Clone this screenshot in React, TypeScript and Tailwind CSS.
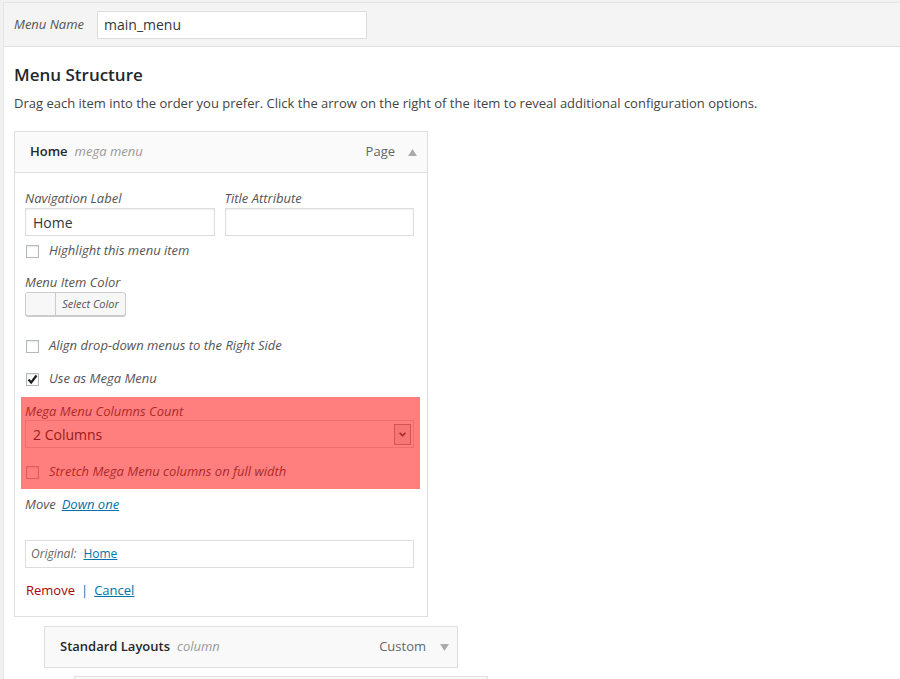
import React from "react";

const Check = ({ checked = false }: { checked?: boolean }) => (
  <span className="relative inline-block w-[13px] h-[13px] border border-[#b4b9be] bg-white shrink-0 shadow-[inset_0_1px_2px_rgba(0,0,0,0.1)]">
    {checked && (
      <svg viewBox="0 0 13 13" className="absolute -left-[1px] -top-[1px] w-[13px] h-[13px]">
        <path d="M2.5 6.5 L5.2 9.5 L10.5 2.5" fill="none" stroke="#1e1e1e" strokeWidth="2.2" />
      </svg>
    )}
  </span>
);

const CheckRow = ({ label, checked = false }: { label: string; checked?: boolean }) => (
  <div className="flex items-center h-[18px] pl-[1px]">
    <Check checked={checked} />
    <span className="ml-[10px] italic text-[13px] text-[#555]">{label}</span>
  </div>
);

const Field = ({ value = "", className = "" }: { value?: string; className?: string }) => (
  <div
    className={
      "h-[28px] border border-[#ddd] bg-white shadow-[inset_0_1px_2px_rgba(0,0,0,0.07)] flex items-center px-[7px] text-[14px] text-[#32373c] " +
      className
    }
  >
    {value}
  </div>
);

export default function App() {
  return (
    <div
      className="min-h-screen bg-[#f1f1f1] pt-[2px] pl-[3px] overflow-hidden"
      style={{ fontFamily: "'Open Sans', 'Liberation Sans', sans-serif" }}
    >
      <div className="bg-white border-l border-t border-[#e5e5e5] h-[677px] text-[#444] text-[13px]">
        {/* menu name header */}
        <div className="bg-[#f4f4f4] border-b border-[#dfdfdf] h-[44px] flex items-center pl-[10px]">
          <span className="italic text-[13px] text-[#555]">Menu Name</span>
          <div className="ml-[13px] w-[270px] h-[28px] border border-[#ddd] bg-white flex items-center px-[6px] text-[14px] text-[#32373c]">
            main_menu
          </div>
        </div>

        <div className="pl-[10px]">
          <h3 className="mt-[17px] text-[17px] font-semibold text-[#23282d] leading-[22px]">Menu Structure</h3>
          <p className="mt-[8px] leading-[18px]">
            Drag each item into the order you prefer. Click the arrow on the right of the item to reveal additional configuration options.
          </p>

          {/* Home item */}
          <div className="mt-[19px] w-[414px] border border-[#dfdfdf] bg-white">
            <div className="h-[41px] bg-[#fafafa] border-b border-[#dfdfdf] flex items-center pl-[15px] pr-[10px]">
              <span className="font-semibold text-[#23282d]">Home</span>
              <span className="ml-[7px] italic text-[#999]">mega menu</span>
              <span className="ml-auto text-[#666]">Page</span>
              <svg viewBox="0 0 10 8" className="ml-[13px] w-[9px] h-[7px]">
                <polygon points="0,8 5,0 10,8" fill="#aaa" />
              </svg>
            </div>

            <div className="pl-[10px] pr-[13px] pt-[16px] pb-[17px]">
              <div className="flex gap-[10px]">
                <div className="w-[190px]">
                  <div className="italic text-[#555] leading-[18px] mb-[1px]">Navigation Label</div>
                  <Field value="Home" />
                </div>
                <div className="w-[190px]">
                  <div className="italic text-[#555] leading-[18px] mb-[1px]">Title Attribute</div>
                  <Field />
                </div>
              </div>

              <div className="mt-[6px]">
                <CheckRow label="Highlight this menu item" />
              </div>

              <div className="mt-[13px] italic text-[#555] leading-[18px]">Menu Item Color</div>
              <div className="mt-[1px] w-[101px] h-[24px] flex border border-[#ccc] rounded-[3px] bg-[#f7f7f7] shadow-[0_1px_0_#ccc] overflow-hidden">
                <div className="w-[30px] border-r border-[#ccc] bg-[#f7f7f7]" />
                <div className="flex-1 flex items-center justify-center italic text-[11px] text-[#555]">Select Color</div>
              </div>

              <div className="mt-[21px]">
                <CheckRow label="Align drop-down menus to the Right Side" />
              </div>
              <div className="mt-[15px]">
                <CheckRow label="Use as Mega Menu" checked />
              </div>

              {/* highlighted mega menu section */}
              <div className="relative mt-[14px]">
                <div className="italic text-[#555] leading-[18px]">Mega Menu Columns Count</div>
                <div className="h-[28px] border border-[#ddd] bg-white flex items-center pl-[7px] pr-[2px] text-[14px] text-[#32373c]">
                  2 Columns
                  <div className="ml-auto w-[17px] h-[21px] border border-[#a9a9a9] bg-[#ececec] flex items-center justify-center">
                    <svg viewBox="0 0 8 6" className="w-[7px] h-[5px]">
                      <path d="M0.5 0.8 L4 4.5 L7.5 0.8" fill="none" stroke="#444" strokeWidth="1.8" />
                    </svg>
                  </div>
                </div>
                <div className="mt-[15px]">
                  <CheckRow label="Stretch Mega Menu columns on full width" />
                </div>
                <div className="absolute -left-[4px] -right-[6px] -top-[5px] -bottom-[8px] bg-[rgba(255,0,0,0.5)]" />
              </div>

              <div className="mt-[14px] leading-[18px]">
                <span className="italic text-[#555]">Move</span>
                <a className="ml-[6px] italic text-[#0073aa] underline">Down one</a>
              </div>

              <div className="mt-[27px] h-[28px] border border-[#ddd] flex items-center px-[5px]">
                <span className="italic text-[12px] text-[#666]">Original:</span>
                <a className="ml-[7px] text-[12px] text-[#0073aa] underline">Home</a>
              </div>

              <div className="mt-[13px] leading-[18px] flex items-center pl-[1px]">
                <span className="text-[#a00]">Remove</span>
                <span className="mx-[6px] text-[#0073aa]">|</span>
                <a className="text-[#0073aa] underline">Cancel</a>
              </div>
            </div>
          </div>

          {/* Standard Layouts item */}
          <div className="ml-[30px] mt-[9px] w-[414px] h-[42px] border border-[#dfdfdf] bg-[#f9f9f9] flex items-center pl-[15px] pr-[8px]">
            <span className="font-semibold text-[#23282d]">Standard Layouts</span>
            <span className="ml-[7px] italic text-[#999]">column</span>
            <span className="ml-auto text-[#666]">Custom</span>
            <svg viewBox="0 0 10 8" className="ml-[14px] w-[9px] h-[7px]">
              <polygon points="0,0 10,0 5,8" fill="#aaa" />
            </svg>
          </div>

          <div className="ml-[60px] mt-[8px] w-[414px] h-[42px] border border-[#dfdfdf] bg-[#f9f9f9]" />
        </div>
      </div>
    </div>
  );
}
